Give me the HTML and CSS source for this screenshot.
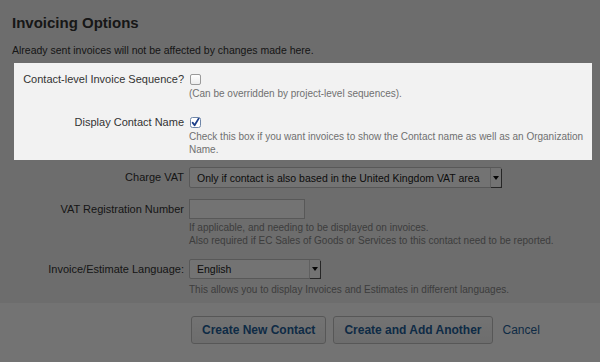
FILE: index.html
```html
<!DOCTYPE html>
<html lang="en">
<head>
    <meta charset="UTF-8">
    <title>Invoicing Options</title>
    <link rel="stylesheet" href="styles.css">
</head>
<body>
    <!-- dimmed page, only the highlighted block stays lit -->
    <div class="overlay"></div>

    <div class="page">
        <h1 class="title">Invoicing Options</h1>
        <p class="intro">Already sent invoices will not be affected by changes made here.</p>

        <div class="highlight">
            <div class="row">
                <label class="label">Contact-level Invoice Sequence?</label>
                <div class="field">
                    <div class="control"><span class="check"></span></div>
                    <p class="help">(Can be overridden by project-level sequences).</p>
                </div>
            </div>
            <div class="row row-gap">
                <label class="label">Display Contact Name</label>
                <div class="field">
                    <div class="control">
                        <svg class="check-on" width="11" height="11" viewBox="0 0 11 11">
                            <rect x="0.5" y="0.5" width="10" height="10" rx="2" fill="#fff" stroke="#6f86a8"/>
                            <path d="M2.6 5.6 L4.6 8.2 L8.6 1.6" fill="none" stroke="#1d3f8a" stroke-width="1.8" stroke-linecap="round" stroke-linejoin="round"/>
                        </svg>
                    </div>
                    <p class="help wide">Check this box if you want invoices to show the Contact name as well as an Organization Name.</p>
                </div>
            </div>
        </div>

        <div class="fields">
            <div class="row">
                <label class="label mid">Charge VAT</label>
                <div class="field">
                    <div class="select select-vat">
                        <span class="select-text">Only if contact is also based in the United Kingdom VAT area</span>
                        <span class="arrow"></span>
                    </div>
                </div>
            </div>
            <div class="row row-vat">
                <label class="label mid-input">VAT Registration Number</label>
                <div class="field">
                    <div class="input"></div>
                    <p class="help help-under">If applicable, and needing to be displayed on invoices.<br>Also required if EC Sales of Goods or Services to this contact need to be reported.</p>
                </div>
            </div>
            <div class="row row-lang">
                <label class="label mid-input">Invoice/Estimate Language:</label>
                <div class="field">
                    <div class="select select-lang">
                        <span class="select-text">English</span>
                        <span class="arrow"></span>
                    </div>
                    <p class="help help-lang">This allows you to display Invoices and Estimates in different languages.</p>
                </div>
            </div>
        </div>
    </div>

    <div class="footer">
        <button class="btn">Create New Contact</button>
        <button class="btn">Create and Add Another</button>
        <a class="cancel">Cancel</a>
    </div>
</body>
</html>
```

FILE: styles.css
```css
body {
    margin: 0;
    padding: 0;
    height: 362px;
    overflow: hidden;
    font-family: "Liberation Sans", Arial, sans-serif;
    font-size: 11px;
    color: #333;
    background: #f2f2f2;
    display: flex;
    flex-direction: column;
}

.overlay {
    position: fixed;
    top: 0;
    left: 0;
    right: 0;
    bottom: 0;
    background: rgba(0, 0, 0, 0.55);
    z-index: 1;
}

.page {
    padding: 0 12px;
}

.title {
    margin: 13px 0 0;
    font-size: 15px;
    line-height: 20px;
    font-weight: bold;
    color: #333;
}

.intro {
    margin: 10px 0 0;
    line-height: 14px;
    font-size: 10.5px;
    color: #333;
}

/* lit block above the overlay */
.highlight {
    position: relative;
    z-index: 2;
    background: #f2f2f2;
    margin: 6px 0 0 2px;
    width: 578px;
    padding: 9px 0 4px;
}

.row {
    display: grid;
    grid-template-columns: 170px 1fr;
    column-gap: 5px;
}

.row-gap {
    margin-top: 15px;
}

.label {
    text-align: right;
    line-height: 14px;
    color: #333;
}

.label.mid {
    line-height: 21px;
}

.label.mid-input {
    line-height: 20px;
}

.control {
    height: 14px;
    display: flex;
    align-items: center;
    padding-left: 1px;
}

.check {
    width: 9px;
    height: 9px;
    border: 1px solid #9a9a9a;
    border-radius: 2px;
    background: linear-gradient(#fff, #ececec);
}

.help {
    margin: 1px 0 0;
    font-size: 10px;
    line-height: 13px;
    color: #707070;
}

.help.wide {
    width: 405px;
}

.fields {
    margin: 7px 0 0 2px;
}

.select {
    display: flex;
    align-items: center;
    height: 21px;
    box-sizing: border-box;
    border: 1px solid #c4c4c4;
    border-radius: 2px;
    background: #fff;
    font-size: 10.5px;
    color: #222;
}

.select-vat {
    width: 313px;
}

.select-lang {
    width: 132px;
    height: 20px;
}

.select-text {
    flex: 1;
    padding-left: 7px;
    white-space: nowrap;
    overflow: hidden;
}

.arrow {
    width: 10px;
    height: 100%;
    border-left: 1px solid #d6d6d6;
    box-shadow: 1px 1px 0 #555;
    display: flex;
    align-items: center;
    justify-content: center;
}

.arrow::after {
    content: "";
    border-left: 3px solid transparent;
    border-right: 3px solid transparent;
    border-top: 4px solid #111;
}

.row-vat {
    margin-top: 11px;
}

.input {
    width: 116px;
    height: 20px;
    box-sizing: border-box;
    border: 1px solid #c4c4c4;
    background: #fff;
}

.help.help-under {
    margin-top: 2px;
    color: #888;
}

.row-lang {
    margin-top: 12px;
}

.help.help-lang {
    margin-top: 4px;
    color: #888;
}

.footer {
    margin-top: auto;
    height: 46px;
    background: #fff;
    padding: 13px 0 0 191px;
    display: flex;
    align-items: flex-start;
}

.btn {
    height: 28px;
    padding: 0 10px;
    border: 1px solid #c2c2c2;
    border-radius: 3px;
    background: linear-gradient(#fff, #f1f1f1);
    font-family: "Liberation Sans", Arial, sans-serif;
    font-size: 12px;
    font-weight: bold;
    color: #1f5f9a;
    margin-right: 7px;
}

.cancel {
    margin-left: 3px;
    line-height: 28px;
    font-size: 12px;
    color: #1f5f9a;
}
```
